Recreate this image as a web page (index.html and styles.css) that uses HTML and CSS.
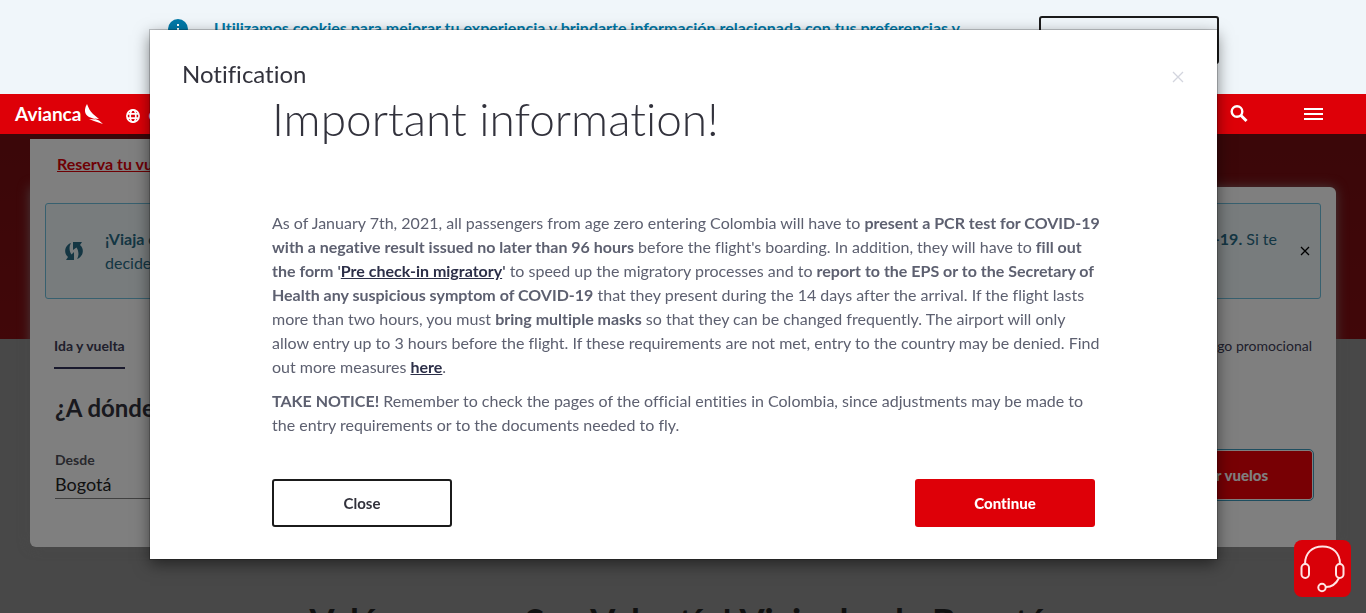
FILE: index.html
```html
<!DOCTYPE html>
<html lang="es">
<head>
<meta charset="utf-8">
<meta name="viewport" content="width=device-width, initial-scale=1">
<title>Avianca</title>
<link rel="stylesheet" href="styles.css">
</head>
<body>
<aside class="cookies">
  <svg class="cookies-icon" width="20" height="20" viewBox="0 0 20 20" aria-hidden="true"><circle cx="10" cy="10" r="10" fill="#0079a8"/><path d="M9 5h2v2H9zM9 9h2v6H9z" fill="#fff"/></svg>
  <p class="cookies-text">Utilizamos cookies para mejorar tu experiencia y brindarte información relacionada con tus preferencias y</p>
  <button class="btn btn-outline" type="button">Aceptar</button>
</aside>
<header class="topbar">
  <a class="brand" href="#"><span>Avianca</span>
    <svg width="18" height="20" viewBox="0 0 18 20" aria-hidden="true"><path fill="#fff" d="M2 0C-1 5-1 10 4 13L11 15.500L4 15L9 17L18 20L14 16.500L9 14.500L14 15L8 10C5 7 3.500 4 2 0Z"/></svg>
  </a>
  <a class="country" href="#">
    <svg width="14" height="14" viewBox="0 0 14 14" fill="none" stroke="#fff" stroke-width="1.700" aria-hidden="true"><circle cx="7" cy="7" r="6.100"/><ellipse cx="7" cy="7" rx="2.800" ry="6.100"/><path d="M1 4.800h12M1 9.200h12"/></svg>
    <span>Colombia</span>
  </a>
  <div class="tools">
    <button class="icon-btn" type="button" aria-label="Buscar"><svg width="18" height="18" viewBox="0 0 18 18" fill="none" stroke="#fff" aria-hidden="true"><circle cx="7" cy="6.500" r="5.300" stroke-width="2.400"/><path d="M10.500 10l6 6" stroke-width="3"/></svg></button>
    <button class="icon-btn" type="button" aria-label="Menú"><svg width="19" height="12" viewBox="0 0 19 12" fill="#fff" aria-hidden="true"><path d="M0 0h19v2H0zM0 5h19v2H0zM0 10h19v2H0z"/></svg></button>
  </div>
</header>
<main class="page">
  <section class="booking">
    <nav class="booking-tab"><a href="#">Reserva tu vuelo</a></nav>
    <div class="panel">
      <div class="alert">
        <svg class="alert-icon" width="18" height="20" viewBox="0 0 18 20" fill="#286c86" aria-hidden="true"><path d="M6 2C0 4-2 12 3 16L1 19H9V11L6.500 13.500C4 10 4 5 6 2ZM12 18C18 16 20 8 15 4L17 1H8V9L11.500 6.500C14 10 14 15 12 18Z"/></svg>
        <p class="alert-start"><strong>¡Viaja con</strong><br>decide</p>
        <p class="alert-end"><strong>COVID-19.</strong> Si te</p>
        <button class="icon-btn" type="button" aria-label="Cerrar aviso"><svg width="10" height="10" viewBox="0 0 10 10" stroke="#000" stroke-width="1.300" aria-hidden="true"><path d="M1 1l8 8M9 1l-8 8"/></svg></button>
      </div>
      <div class="options"><a class="trip" href="#">Ida y vuelta</a><a class="promo" href="#">Código promocional</a></div>
      <h2 class="question">¿A dónde quieres ir?</h2>
      <div class="search">
        <div class="field"><label for="from">Desde</label><input id="from" type="text" value="Bogotá"></div>
        <button class="btn btn-search" type="button">Buscar vuelos</button>
      </div>
    </div>
  </section>
  <h2 class="offers">Valóranos en San Valentín! Viaja desde Bogotá</h2>
</main>
<div class="overlay"></div>
<div class="modal">
  <section class="dialog" role="dialog" aria-modal="true" aria-labelledby="dialog-title">
    <header class="dialog-head">
      <h2 id="dialog-title">Notification</h2>
      <button class="icon-btn" type="button" aria-label="Close notification"><svg width="12" height="12" viewBox="0 0 12 12" stroke="#d3d5de" stroke-width="1.300" aria-hidden="true"><path d="M1 1l10 10M11 1L1 11"/></svg></button>
    </header>
    <div class="dialog-body">
      <h1>Important information!</h1>
      <p>As of January 7th, 2021, all passengers from age zero entering Colombia will have to <strong>present a PCR test for COVID-19<br>with a negative result issued no later than 96 hours</strong> before the flight's boarding. In addition, they will have to <strong>fill out<br>the form '<a href="#">Pre check-in migratory</a>'</strong> to speed up the migratory processes and to <strong>report to the EPS or to the Secretary of<br>Health any suspicious symptom of COVID-19</strong> that they present during the 14 days after the arrival. If the flight lasts<br>more than two hours, you must <strong>bring multiple masks</strong> so that they can be changed frequently. The airport will only<br>allow entry up to 3 hours before the flight. If these requirements are not met, entry to the country may be denied. Find<br>out more measures <strong><a href="#">here</a></strong>.</p>
      <p><strong>TAKE NOTICE!</strong> Remember to check the pages of the official entities in Colombia, since adjustments may be made to<br>the entry requirements or to the documents needed to fly.</p>
      <div class="actions">
        <button class="btn btn-outline" type="button">Close</button>
        <button class="btn btn-primary" type="button">Continue</button>
      </div>
    </div>
  </section>
</div>
<button class="chat" type="button" aria-label="Ayuda">
  <svg width="57" height="57" viewBox="0 0 57 57" fill="none" stroke="#ffe4e4" stroke-width="2" aria-hidden="true"><path d="M11 24C11 13 18 6.500 28.500 6.500S46 13 46 24M45 38C42 44 37 47 32 47"/><rect x="7.500" y="24" width="7.500" height="14" rx="3.700"/><rect x="42" y="24" width="7.500" height="14" rx="3.700"/><circle cx="28" cy="47.500" r="3.700"/></svg>
</button>
</body>
</html>
```

FILE: styles.css
```css
* { box-sizing: border-box; }
body { margin: 0; overflow: hidden; background: #909090; color: #32323c; font: 16px/24px Lato, "Open Sans", sans-serif; font-variant-ligatures: none; }
h1, h2, p { margin: 0; }
button { font: inherit; cursor: pointer; }
.icon-btn { display: flex; padding: 0; border: 0; background: none; }
.btn { width: 180px; height: 48px; border-radius: 3px; font-size: 15px; font-weight: 700; }
.btn-outline { border: 2px solid #1b1b1b; background: transparent; color: #32323c; }
.btn-primary { border: 0; background: #de0008; color: #fff; font-weight: 900; }

.cookies { position: relative; z-index: 20; display: flex; align-items: flex-start; height: 94px; padding: 16px 147px 0 168px; background: #f0f6fa; }
.cookies-icon { margin-top: 3px; }
.cookies-text { flex: 1; margin-left: 26px; color: #0079a8; font-weight: 700; white-space: nowrap; }

.topbar { position: relative; z-index: 20; display: flex; align-items: center; height: 40px; padding: 0 43px 0 15px; background: #de0008; color: #fff; }
.topbar a { display: flex; align-items: center; color: inherit; text-decoration: none; }
.brand { gap: 4px; font-size: 19px; font-weight: 700; }
.country { gap: 8px; margin: 4px 0 0 23px; font-size: 14px; }
.tools { display: flex; align-items: center; gap: 56px; margin-left: auto; }

.page { padding: 5px 30px 0; background: linear-gradient(#760e12, #820e12) top / 100% 205px no-repeat; }
.booking-tab { position: relative; z-index: 1; display: flex; align-items: center; width: 300px; height: 48px; padding: 2px 27px 0; background: #fff; }
.booking-tab a { color: #de0008; font-weight: 700; }
.panel { height: 360px; padding: 16px 15px 0; border-radius: 0 6px 6px; background: #fff; box-shadow: 0 0 12px rgba(144, 144, 144, .8); }
.alert { display: flex; align-items: center; height: 96px; padding: 0 10px 0 19px; border: 1px solid #6ec1df; border-radius: 3px; background: #f0f8fb; color: #286c86; }
.alert-start { margin-left: 22px; }
.alert-end { align-self: flex-start; margin: 23px 23px 0 auto; }
.options { display: flex; justify-content: space-between; margin: 35px 9px 0; font-size: 14px; }
.options a { color: #404058; text-decoration: none; }
.trip { padding-bottom: 9px; border-bottom: 2px solid #32325a; font-weight: 700; }
.question { margin: 23px 10px 0; font-size: 24px; line-height: 32px; }
.search { display: flex; align-items: flex-start; justify-content: space-between; padding: 24px 9px 0 10px; }
.field { display: flex; flex-direction: column; width: 260px; }
.field label { font-size: 14px; line-height: 24px; font-weight: 700; color: #50505a; }
.field input { width: 100%; height: 27px; padding: 0 0 3px; border: 0; border-bottom: 1px solid #808080; background: none; color: #222; font: 18px Lato, sans-serif; }
.btn-search { margin-top: 3px; border: 0; outline: 1px solid #3c9cc0; outline-offset: 1px; background: #f00008; color: #fff; font-weight: 900; }
.offers { padding: 50px 10px 0 0; color: #222; font-size: 36px; line-height: 48px; text-align: center; }

.overlay { position: fixed; inset: 0; z-index: 10; background: rgba(0, 0, 0, .5); }
.modal { position: fixed; inset: 0; z-index: 30; display: flex; align-items: flex-start; justify-content: center; padding: 30px 16px 0 17px; }
.dialog { width: 100%; max-width: 1067px; padding: 32px; background: #fff; box-shadow: 0 0 0 1px rgba(0, 0, 0, .2), 0 5px 15px rgba(0, 0, 0, .5); }
.dialog-head { display: flex; align-items: flex-start; justify-content: space-between; height: 24px; }
.dialog-head h2 { font-size: 24px; font-weight: 400; }
.dialog-head .icon-btn { margin: 9px 1px 0 0; }
.dialog-body { padding: 0 90px; color: #5d6070; }
.dialog-body h1 { margin-bottom: 59px; color: #32323c; font-size: 46px; line-height: 66px; font-weight: 300; }
.dialog-body p { margin-bottom: 10px; white-space: nowrap; }
.dialog-body a { color: #2c2f48; }
.actions { display: flex; justify-content: space-between; margin-top: 42px; }

.chat { position: fixed; right: 15px; bottom: 16px; z-index: 40; display: flex; padding: 0; border: 0; border-radius: 8px; background: #d90008; }

@media (max-width: 1200px) {
  .dialog-body { padding: 0; }
  .dialog-body p { white-space: normal; }
  .dialog-body br { display: none; }
}
```
